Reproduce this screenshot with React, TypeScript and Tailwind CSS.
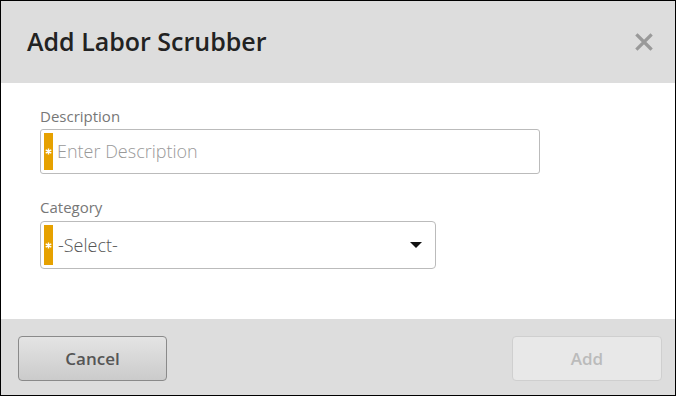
import React from "react";

function RequiredBar() {
  return (
    <div className="w-[9px] self-stretch bg-[#e6a100] flex items-center justify-center shrink-0">
      <svg width="7" height="7" viewBox="0 0 8 8">
        <path d="M4 0.5 V7.5 M0.8 2.2 L7.2 5.8 M0.8 5.8 L7.2 2.2" stroke="#fff" strokeWidth="1.6" />
      </svg>
    </div>
  );
}

export default function App() {
  return (
    <div
      className="w-[676px] h-[396px] border border-black bg-white flex flex-col overflow-hidden"
      style={{ fontFamily: '"Open Sans", "Liberation Sans", sans-serif' }}
    >
      {/* header */}
      <div className="h-[82px] bg-[#dddddd] flex items-center justify-between pl-[26px] pr-[22px] shrink-0">
        <h2 className="text-[25px] font-semibold text-[#222]">Add Labor Scrubber</h2>
        <svg width="18" height="18" viewBox="0 0 18 18" className="mt-[-1px]">
          <path d="M2.5 2.5 L15.5 15.5 M15.5 2.5 L2.5 15.5" stroke="#999" strokeWidth="3.2" strokeLinecap="square" />
        </svg>
      </div>

      {/* body */}
      <div className="flex-1 flex flex-col pl-[39px] pt-[23px]">
        <label className="text-[15px] text-[#777] leading-[20px]">Description</label>
        <div className="mt-[3px] w-[500px] h-[45px] border border-[#bbb] rounded-[3px] flex items-stretch p-[3px]">
          <RequiredBar />
          <input
            className="flex-1 outline-none pl-[4px] text-[18px] font-light text-[#444] placeholder:text-[#999]"
            placeholder="Enter Description"
          />
        </div>

        <label className="mt-[23px] text-[15px] text-[#777] leading-[20px]">Category</label>
        <div className="mt-[4px] w-[396px] h-[48px] border border-[#bbb] rounded-[4px] flex items-stretch p-[3px]">
          <RequiredBar />
          <div className="flex-1 flex items-center justify-between pl-[5px] pr-[10px]">
            <span className="text-[18px] font-light text-[#555]">-Select-</span>
            <svg width="12" height="6" viewBox="0 0 12 6">
              <path d="M0 0 H12 L6 6 Z" fill="#111" />
            </svg>
          </div>
        </div>
      </div>

      {/* footer */}
      <div className="h-[76px] bg-[#dddddd] flex items-start justify-between pl-[17px] pr-[13px] pt-[17px] shrink-0">
        <button className="w-[149px] h-[45px] rounded-[4px] border border-[#8a8a8a] bg-gradient-to-b from-[#e4e4e4] to-[#cbcbcb] text-[17px] font-semibold text-[#555]">
          Cancel
        </button>
        <button className="w-[150px] h-[45px] rounded-[4px] border border-[#cfcfcf] bg-[#e8e8e8] text-[17px] font-semibold text-[#bbb]">
          Add
        </button>
      </div>
    </div>
  );
}
